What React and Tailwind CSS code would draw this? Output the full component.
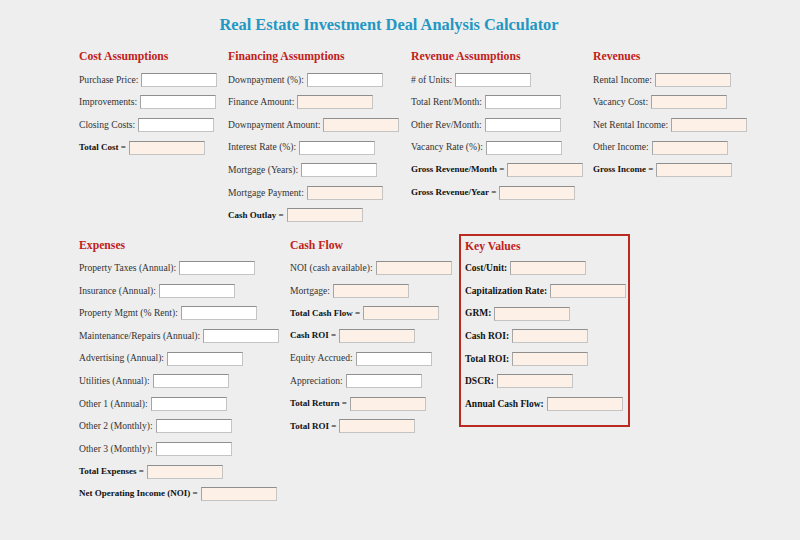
import React from "react";

const calcBg = "bg-[#fdf0e6]";

function Field({ label, bold, calc, w = "w-[76px]" }) {
  return (
    <div className="flex h-[22.6px] items-center whitespace-nowrap">
      <span className={bold ? "font-bold text-[9px] text-[#111]" : "text-[9.6px] text-[#333]"}>{label}</span>
      <input
        readOnly={calc}
        className={
          "ml-[3px] h-[14px] border border-[#c4c4c4] border-t-[#8e8e8e] border-l-[#a5a5a5] outline-none " +
          w +
          " " +
          (calc ? calcBg : "bg-white")
        }
      />
    </div>
  );
}

function Heading({ children }) {
  return (
    <div className="flex h-[22.6px] items-center">
      <h2 className="text-[11.7px] font-bold text-[#c0211b]">{children}</h2>
    </div>
  );
}

const costs = [
  ["Purchase Price:"],
  ["Improvements:"],
  ["Closing Costs:"],
  ["Total Cost =", true, true],
];

const financing = [
  ["Downpayment (%):"],
  ["Finance Amount:", false, true],
  ["Downpayment Amount:", false, true],
  ["Interest Rate (%):"],
  ["Mortgage (Years):"],
  ["Mortgage Payment:", false, true],
  ["Cash Outlay =", true, true],
];

const revAssump = [
  ["# of Units:"],
  ["Total Rent/Month:"],
  ["Other Rev/Month:"],
  ["Vacancy Rate (%):"],
  ["Gross Revenue/Month =", true, true],
  ["Gross Revenue/Year =", true, true],
];

const revenues = [
  ["Rental Income:", false, true],
  ["Vacancy Cost:", false, true],
  ["Net Rental Income:", false, true],
  ["Other Income:", false, true],
  ["Gross Income =", true, true],
];

const expenses = [
  ["Property Taxes (Annual):"],
  ["Insurance (Annual):"],
  ["Property Mgmt (% Rent):"],
  ["Maintenance/Repairs (Annual):"],
  ["Advertising (Annual):"],
  ["Utilities (Annual):"],
  ["Other 1 (Annual):"],
  ["Other 2 (Monthly):"],
  ["Other 3 (Monthly):"],
  ["Total Expenses =", true, true],
  ["Net Operating Income (NOI) =", true, true],
];

const cashFlow = [
  ["NOI (cash available):", false, true],
  ["Mortgage:", false, true],
  ["Total Cash Flow =", true, true],
  ["Cash ROI =", true, true],
  ["Equity Accrued:"],
  ["Appreciation:"],
  ["Total Return =", true, true],
  ["Total ROI =", true, true],
];

const keyValues = [
  "Cost/Unit:",
  "Capitalization Rate:",
  "GRM:",
  "Cash ROI:",
  "Total ROI:",
  "DSCR:",
  "Annual Cash Flow:",
];

function Column({ title, rows, className }) {
  return (
    <div className={className}>
      <Heading>{title}</Heading>
      {rows.map((r) => (
        <Field key={r[0]} label={r[0]} bold={r[1]} calc={r[2]} />
      ))}
    </div>
  );
}

export default function App() {
  return (
    <div
      className="min-h-[540px] w-full bg-[#eeeeee]"
      style={{ fontFamily: '"Liberation Serif", "Times New Roman", serif' }}
    >
      <div className="w-[778px] pt-[15px]">
        <h1 className="text-center text-[16.4px] leading-[20px] font-bold text-[#2397c3]">
          Real Estate Investment Deal Analysis Calculator
        </h1>
      </div>

      <div className="mt-[10.9px] flex pl-[79px]">
        <Column title="Cost Assumptions" rows={costs} className="w-[149px]" />
        <Column title="Financing Assumptions" rows={financing} className="w-[183px]" />
        <Column title="Revenue Assumptions" rows={revAssump} className="w-[182px]" />
        <Column title="Revenues" rows={revenues} className="flex-1" />
      </div>

      <div className="mt-[7.7px] flex items-start pl-[79px]">
        <Column title="Expenses" rows={expenses} className="w-[211px]" />
        <Column title="Cash Flow" rows={cashFlow} className="w-[169px]" />
        <div className="w-[171px] border-2 border-[#bb2a20] pb-[10px] pl-[4px]">
          <div className="flex h-[20.7px] items-center">
            <h2 className="text-[11.7px] font-bold text-[#c0211b]">Key Values</h2>
          </div>
          {keyValues.map((k) => (
            <div key={k} className="flex h-[22.6px] items-center whitespace-nowrap">
              <span className="text-[9.5px] font-bold text-[#111]">{k}</span>
              <input
                readOnly
                className={
                  "ml-[3px] h-[14px] w-[76px] border border-[#c4c4c4] border-t-[#8e8e8e] border-l-[#a5a5a5] outline-none " +
                  calcBg
                }
              />
            </div>
          ))}
        </div>
      </div>
    </div>
  );
}
